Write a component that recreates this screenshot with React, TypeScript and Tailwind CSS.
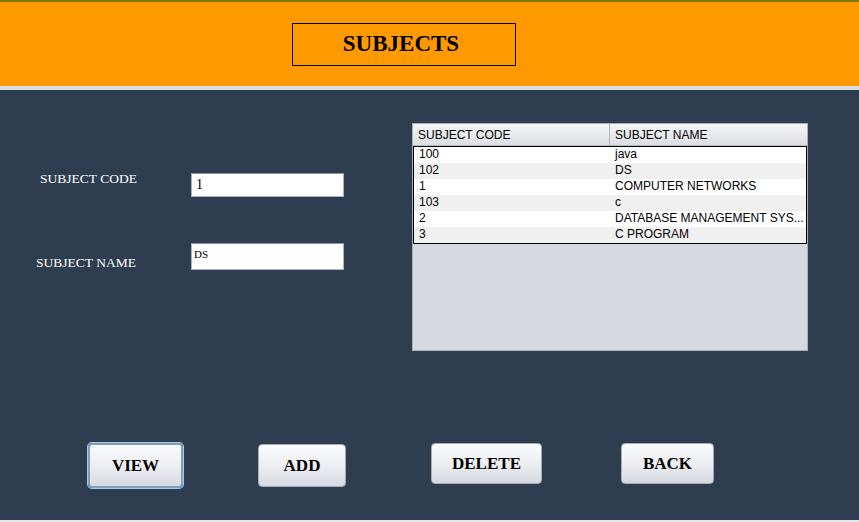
import React from "react";

const rows: [string, string][] = [
  ["100", "java"],
  ["102", "DS"],
  ["1", "COMPUTER NETWORKS"],
  ["103", "c"],
  ["2", "DATABASE MANAGEMENT SYS..."],
  ["3", "C PROGRAM"],
];

const serif = "font-['Liberation_Serif','Times_New_Roman',serif]";
const sans = "font-['Liberation_Sans',Arial,sans-serif]";

function Btn({ label, cls }: { label: string; cls: string }) {
  return (
    <div
      className={`flex items-center justify-center rounded-[4px] bg-gradient-to-b from-[#fafbfc] via-[#eceef2] to-[#d6d9e0] text-[17px] font-bold text-black ${serif} ${cls}`}
    >
      {label}
    </div>
  );
}

export default function App() {
  return (
    <div className="w-[859px] h-[522px] overflow-hidden bg-[#2e3e50]">
      <div className="h-[2px] bg-[#7b7a10]" />
      <div className="h-[84px] bg-[#ff9900] pt-[21px]">
        <div
          className={`ml-[292px] w-[224px] h-[43px] border border-black flex items-center justify-center pr-[6px] text-[23px] font-bold text-black ${serif}`}
        >
          SUBJECTS
        </div>
      </div>
      <div className="h-[4px] bg-[#dcdde0]" />
      <div className="h-[430px] flex flex-col">
        <div className="flex">
          <div className="w-[412px] flex flex-col">
            <div className="mt-[81px] flex items-start">
              <div className={`w-[191px] pl-[40px] text-[13.5px] leading-[16px] text-white ${serif}`}>
                SUBJECT CODE
              </div>
              <div
                className={`mt-[2px] w-[153px] h-[24px] bg-white border border-[#aab2bf] border-t-[#8a93a0] pl-[4px] text-[14px] leading-[22px] text-black ${serif}`}
              >
                1
              </div>
            </div>
            <div className="mt-[46px] flex items-start">
              <div className={`w-[191px] pl-[36px] mt-[12px] text-[13.5px] leading-[16px] text-white ${serif}`}>
                SUBJECT NAME
              </div>
              <div
                className={`w-[153px] h-[27px] bg-white border border-[#aab2bf] border-t-[#8a93a0] pl-[2px] pt-[3px] text-[11px] leading-[14px] text-black ${serif}`}
              >
                DS
              </div>
            </div>
          </div>
          <div className="mt-[33px] w-[396px] h-[228px] bg-[#d6d9e0] border border-[#a9afb8] flex flex-col">
            <div
              className={`h-[22px] flex bg-gradient-to-b from-[#f4f5f7] to-[#dcdee3] border-b border-[#b8bcc4] text-[12px] leading-[22px] text-black ${sans}`}
            >
              <div className="w-[197px] pl-[5px] border-r border-[#b0b4bb]">SUBJECT CODE</div>
              <div className="flex-1 pl-[5px]">SUBJECT NAME</div>
            </div>
            <div className="border border-black">
              {rows.map(([c, n], i) => (
                <div
                  key={i}
                  className={`h-[16px] flex text-[12px] leading-[15px] text-black ${sans} ${i % 2 === 0 ? "bg-white" : "bg-[#f0f0f0]"}`}
                >
                  <div className="w-[196px] pl-[5px]">{c}</div>
                  <div className="flex-1 pl-[5px]">{n}</div>
                </div>
              ))}
            </div>
          </div>
        </div>
        <div className="mt-[92px] flex items-start">
          <Btn label="VIEW" cls="ml-[88px] w-[95px] h-[45px] border-2 border-[#7f9dbd] shadow-[0_0_0_1px_#b9c9db]" />
          <Btn label="ADD" cls="ml-[75px] mt-px w-[88px] h-[43px] border border-[#a7adb6]" />
          <Btn label="DELETE" cls="ml-[85px] w-[111px] h-[41px] border border-[#a7adb6]" />
          <Btn label="BACK" cls="ml-[79px] w-[93px] h-[41px] border border-[#a7adb6]" />
        </div>
      </div>
      <div className="h-[2px] bg-[#e6e7ea]" />
    </div>
  );
}
